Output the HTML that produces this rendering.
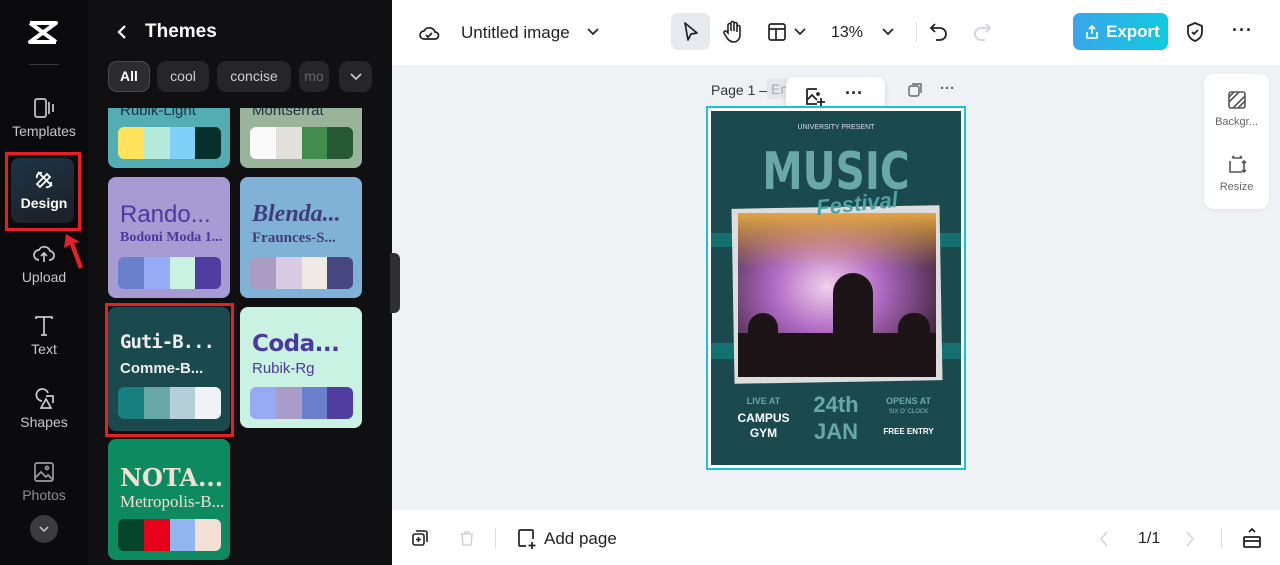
<!DOCTYPE html>
<html><head><meta charset="utf-8"><style>
*{box-sizing:border-box;margin:0;padding:0}
body{width:1280px;height:565px;overflow:hidden;font-family:"Liberation Sans",sans-serif;background:#eff2f5;position:relative}
.abs{position:absolute}
#side{left:0;top:0;width:88px;height:565px;background:#0b0b0d}
#panel{left:88px;top:0;width:304px;height:565px;background:#101013}
.nav{position:absolute;left:0;width:88px;text-align:center;color:#c9c9cc;font-size:14px}
.nav svg{display:block;margin:0 auto 3px}
.chip{position:absolute;top:61px;height:31px;border-radius:9px;background:#26262a;color:#cfcfd2;font-size:14px;line-height:31px;text-align:center}
.card{position:absolute;width:122px;height:121px;border-radius:8px;overflow:hidden}
.card .t1{position:absolute;left:12px;top:24px;font-size:22px;white-space:nowrap}
.card .t2{position:absolute;left:12px;top:53px;font-size:15px;white-space:nowrap}
.pal{position:absolute;left:10px;top:80px;width:103px;height:32px;border-radius:6px;overflow:hidden;display:flex}
.pal i{flex:1}
#top{left:392px;top:0;width:888px;height:65px;background:#fff}
#bot{left:392px;top:510px;width:888px;height:55px;background:#fff}
.ic{position:absolute}
</style></head><body>
<div id="side" class="abs">
 <svg class="abs" style="left:27px;top:20px" width="32" height="26" viewBox="0 0 32 26"><path d="M3 3h26L3 22h26M3 3l26 19" stroke="#fff" stroke-width="4" fill="none" stroke-linejoin="round"/></svg>
 <div class="abs" style="left:29px;top:64px;width:30px;height:1px;background:#3a3a3e"></div>
 <div class="nav" style="top:96px"><svg width="24" height="24" viewBox="0 0 24 24" fill="none" stroke="#c9c9cc" stroke-width="1.7"><rect x="3" y="3" width="11" height="18" rx="2"/><path d="M17 6v12M21 8v8"/></svg>Templates</div>
 <div class="abs" style="left:5px;top:152px;width:76px;height:79px;border:3px solid #e5202a"></div>
 <div class="abs" style="left:11px;top:158px;width:63px;height:65px;border-radius:8px;background:linear-gradient(160deg,#1d3448,#1d1f25)"></div>
 <div class="nav" style="top:168px;color:#fff;font-weight:bold"><svg width="24" height="24" viewBox="0 0 24 24" fill="none" stroke="#fff" stroke-width="1.8"><path d="M6 4l14 14M5 10a4 4 0 0 1 5-5M19 14a4 4 0 0 1-5 5M8 19l-3-3 10-10 3 3z"/></svg>Design</div>
 <svg class="abs" style="left:62px;top:232px" width="22" height="40" viewBox="0 0 22 40"><path d="M4 2l-2 14 6-3 9 24 4-2-9-24 6-1z" fill="#e5202a"/></svg>
 <div class="nav" style="top:242px"><svg width="24" height="24" viewBox="0 0 24 24" fill="none" stroke="#c9c9cc" stroke-width="1.7"><path d="M7 18a5 5 0 0 1 0-10 6 6 0 0 1 11 1 4 4 0 0 1-1 9M12 20v-9M9 14l3-3 3 3"/></svg>Upload</div>
 <div class="nav" style="top:314px"><svg width="24" height="24" viewBox="0 0 24 24" fill="none" stroke="#c9c9cc" stroke-width="1.7"><path d="M4 5V3h16v2M12 3v18M9 21h6"/></svg>Text</div>
 <div class="nav" style="top:387px"><svg width="24" height="24" viewBox="0 0 24 24" fill="none" stroke="#c9c9cc" stroke-width="1.7"><path d="M10 14a6 6 0 1 1 6-8M14 9h7v7M9 21l5-9 5 9z"/></svg>Shapes</div>
 <div class="nav" style="top:460px;color:#8f8f94"><svg width="24" height="24" viewBox="0 0 24 24" fill="none" stroke="#9a9aa0" stroke-width="1.7"><rect x="3" y="3" width="18" height="18" rx="2"/><circle cx="15" cy="8" r="1.5"/><path d="M3 18l6-6 5 5 2-2 5 5"/></svg>Photos</div>
 <div class="abs" style="left:30px;top:515px;width:28px;height:28px;border-radius:50%;background:#3a3a3f"></div>
 <svg class="abs" style="left:38px;top:525px" width="12" height="8" viewBox="0 0 12 8"><path d="M2 2l4 4 4-4" stroke="#ccc" stroke-width="1.5" fill="none"/></svg>
</div>
<div id="panel" class="abs">
 <svg class="abs" style="left:28px;top:24px" width="12" height="16" viewBox="0 0 12 16"><path d="M9 2L3 8l6 6" stroke="#fff" stroke-width="2.2" fill="none"/></svg>
 <div class="abs" style="left:57px;top:21px;color:#fff;font-weight:bold;font-size:19px">Themes</div>
 <div class="chip" style="left:20px;width:42px;background:#2b2b30;border:1px solid #4a4a50;color:#fff;font-weight:bold;line-height:29px">All</div>
 <div class="chip" style="left:69px;width:52px">cool</div>
 <div class="chip" style="left:129px;width:74px">concise</div>
 <div class="chip" style="left:211px;width:30px;overflow:hidden;color:#666">mo</div>
 <div class="chip" style="left:251px;width:33px"><svg width="12" height="8" viewBox="0 0 12 8" style="margin-top:11px"><path d="M1 1l5 5 5-5" stroke="#ccc" stroke-width="1.6" fill="none"/></svg></div>
 <div class="abs" style="left:0;top:108px;width:304px;height:457px;overflow:hidden">
  <div class="card" style="left:20px;top:-61px;background:#53aeb3"><div class="t2" style="top:55px;color:#234">Rubik-Light</div><div class="pal"><i style="background:#fde35b"></i><i style="background:#b6ead8"></i><i style="background:#7fcff9"></i><i style="background:#06302b"></i></div></div>
  <div class="card" style="left:152px;top:-61px;background:#9ab49b"><div class="t2" style="top:55px;color:#234">Montserrat</div><div class="pal"><i style="background:#fafafa"></i><i style="background:#e2e0dc"></i><i style="background:#428c4e"></i><i style="background:#275a32"></i></div></div>
  <div class="card" style="left:20px;top:69px;background:#a89ad3"><div class="t1" style="color:#4a3a9e;font-size:24px">Rando...</div><div class="t2" style="color:#4a3a9e;font-family:'Liberation Serif',serif;font-weight:bold;font-size:14px">Bodoni Moda 1...</div><div class="pal"><i style="background:#6a80cc"></i><i style="background:#97aaf6"></i><i style="background:#c9f2e2"></i><i style="background:#4f3e9f"></i></div></div>
  <div class="card" style="left:152px;top:69px;background:#80b2d8"><div class="t1" style="color:#3e3d7a;font-family:'Liberation Serif',serif;font-weight:bold;font-style:italic;font-size:24px">Blenda...</div><div class="t2" style="color:#3e3d7a;font-family:'Liberation Serif',serif;font-weight:bold">Fraunces-S...</div><div class="pal"><i style="background:#aa9cc2"></i><i style="background:#dacbe5"></i><i style="background:#efebe4"></i><i style="background:#46477e"></i></div></div>
  <div class="abs" style="left:17px;top:195px;width:129px;height:134px;border:3px solid #e5202a"></div>
  <div class="card" style="left:20px;top:199px;width:122px;height:124px;background:#1b4a4e"><div class="t1" style="color:#eee;font-family:'DejaVu Sans Mono',monospace;font-weight:bold;font-size:19px;letter-spacing:-1px">Guti-B...</div><div class="t2" style="color:#eee;font-weight:bold">Comme-B...</div><div class="pal"><i style="background:#177f7e"></i><i style="background:#68a9a8"></i><i style="background:#b5cfd8"></i><i style="background:#eff3f6"></i></div></div>
  <div class="card" style="left:152px;top:199px;background:#c9f2e2"><div class="t1" style="color:#4a3a9e;font-weight:bold;font-family:'DejaVu Sans',sans-serif;font-size:23px;letter-spacing:-0.5px">Coda...</div><div class="t2" style="color:#4a3a9e">Rubik-Rg</div><div class="pal"><i style="background:#97aaf6"></i><i style="background:#aa9cc9"></i><i style="background:#6a80cc"></i><i style="background:#4f3e9f"></i></div></div>
  <div class="card" style="left:20px;top:331px;background:#0e8a61"><div class="t1" style="color:#f3e0d5;font-weight:bold;font-family:'DejaVu Serif',serif;font-size:24px">NOTA...</div><div class="t2" style="color:#f3e0d5;font-family:'Liberation Serif',serif;font-size:17px">Metropolis-B...</div><div class="pal"><i style="background:#04442a"></i><i style="background:#e6001a"></i><i style="background:#92b6f0"></i><i style="background:#f3e0d5"></i></div></div>
 </div>
</div>
<div class="abs" style="left:390px;top:253px;width:10px;height:60px;background:#2f2f33;border-radius:0 6px 6px 0"></div>
<div id="top" class="abs">
 <svg class="ic" style="left:26px;top:22px" width="22" height="20" viewBox="0 0 22 20" fill="none" stroke="#222" stroke-width="1.7"><path d="M6 17a4 4 0 0 1 0-8 6 6 0 0 1 11 1 3.5 3.5 0 0 1 0 7zM8 13l2 2 4-4"/></svg>
 <div class="abs" style="left:69px;top:23px;font-size:17px;color:#222">Untitled image</div>
 <svg class="ic" style="left:195px;top:28px" width="12" height="8" viewBox="0 0 12 8"><path d="M1 1l5 5 5-5" stroke="#222" stroke-width="1.7" fill="none"/></svg>
 <div class="abs" style="left:279px;top:13px;width:39px;height:37px;border-radius:7px;background:#e6eaee"></div>
 <svg class="ic" style="left:290px;top:21px" width="18" height="22" viewBox="0 0 18 22"><path d="M3 2l12 10-6 1-3 6z" stroke="#222" stroke-width="1.7" fill="none" stroke-linejoin="round"/></svg>
 <svg class="ic" style="left:331px;top:20px" width="20" height="24" viewBox="0 0 20 24" fill="none" stroke="#222" stroke-width="1.6"><path d="M5 13V5a1.5 1.5 0 0 1 3 0v6V3a1.5 1.5 0 0 1 3 0v8V4a1.5 1.5 0 0 1 3 0v8V7a1.5 1.5 0 0 1 3 0v8c0 4-3 7-6 7s-5-1-7-4l-3-5a1.5 1.5 0 0 1 3-1z"/></svg>
 <svg class="ic" style="left:375px;top:22px" width="20" height="20" viewBox="0 0 20 20" fill="none" stroke="#222" stroke-width="1.7"><rect x="2" y="2" width="16" height="16" rx="2"/><path d="M2 7h16M9 7v11"/></svg>
 <svg class="ic" style="left:402px;top:28px" width="12" height="8" viewBox="0 0 12 8"><path d="M1 1l5 5 5-5" stroke="#222" stroke-width="1.6" fill="none"/></svg>
 <div class="abs" style="left:439px;top:24px;font-size:16px;color:#222">13%</div>
 <svg class="ic" style="left:490px;top:28px" width="12" height="8" viewBox="0 0 12 8"><path d="M1 1l5 5 5-5" stroke="#222" stroke-width="1.7" fill="none"/></svg>
 <div class="abs" style="left:524px;top:22px;width:1px;height:20px;background:#ddd"></div>
 <svg class="ic" style="left:537px;top:21px" width="20" height="22" viewBox="0 0 20 22" fill="none" stroke="#222" stroke-width="1.8"><path d="M6 3L2 7l4 4M2 7h9a6 6 0 0 1 0 12H7"/></svg>
 <svg class="ic" style="left:580px;top:21px" width="20" height="22" viewBox="0 0 20 22" fill="none" stroke="#cfd3d8" stroke-width="1.8"><path d="M14 3l4 4-4 4M18 7H9a6 6 0 0 0 0 12h4"/></svg>
 <div class="abs" style="left:681px;top:13px;width:95px;height:37px;border-radius:7px;background:linear-gradient(90deg,#3aa5ea,#10cbe0);color:#fff;font-weight:bold;font-size:17px;line-height:37px;padding-left:33px">Export</div>
 <svg class="ic" style="left:692px;top:24px" width="16" height="16" viewBox="0 0 16 16" fill="none" stroke="#fff" stroke-width="1.6"><path d="M8 10V2M5 5l3-3 3 3M3 8v6h10V8"/></svg>
 <svg class="ic" style="left:793px;top:21px" width="20" height="22" viewBox="0 0 20 22" fill="none" stroke="#222" stroke-width="1.8"><path d="M10 2l7 3v6c0 5-4 8-7 9-3-1-7-4-7-9V5zM7 11l2 2 4-4"/></svg>
 <div class="abs" style="left:840px;top:20px;font-size:18px;font-weight:bold;color:#222;letter-spacing:1px">···</div>
</div>
<!-- canvas -->
<div class="abs" style="left:711px;top:82px;font-size:14px;color:#333">Page 1 –</div>
<div class="abs" style="left:767px;top:79px;width:30px;height:20px;background:#e3e7eb;border-radius:3px;color:#aaa;font-size:14px;padding:2px 4px">En</div>
<div class="abs" style="left:786px;top:77px;width:99px;height:39px;background:#fff;border-radius:8px;box-shadow:0 2px 6px rgba(0,0,0,.12)"></div>
<svg class="ic" style="left:804px;top:86px" width="22" height="22" viewBox="0 0 22 22" fill="none" stroke="#222" stroke-width="1.8"><path d="M13 3H4a1 1 0 0 0-1 1v14h10M3 14l5-5 5 5"/><circle cx="14" cy="8" r="1"/><path d="M17 12v8M13 16h8"/></svg>
<div class="abs" style="left:845px;top:83px;font-size:18px;font-weight:bold;color:#222">···</div>
<svg class="ic" style="left:907px;top:82px" width="16" height="16" viewBox="0 0 16 16" fill="none" stroke="#666" stroke-width="1.4"><rect x="2" y="4" width="10" height="10" rx="2"/><path d="M5 2h9v9"/></svg>
<div class="abs" style="left:940px;top:80px;font-size:15px;color:#666;font-weight:bold">···</div>
<div class="abs" style="left:706px;top:106px;width:260px;height:364px;border:2px solid #18c2dc;background:#fff"></div>
<div class="abs" style="left:711px;top:111px;width:250px;height:354px;background:#1b4a4e;overflow:hidden">
 <div class="abs" style="left:0;top:122px;width:250px;height:14px;background:#147b7a;opacity:.8"></div>
 <div class="abs" style="left:0;top:232px;width:250px;height:16px;background:#147b7a;opacity:.8"></div>
 <div class="abs" style="left:0;top:13px;width:250px;text-align:center;color:#dde;font-size:7px">UNIVERSITY PRESENT</div>
 <div class="abs" style="left:0;top:32px;width:250px;text-align:center;color:#6aa8a8;font-size:52px;font-weight:bold;line-height:58px;font-family:'DejaVu Sans',sans-serif;transform:scaleX(.78)">MUSIC</div>
 <div class="abs" style="left:22px;top:96px;width:208px;height:175px;background:#ddd;transform:rotate(-1deg)"></div>
 <div class="abs" style="left:27px;top:102px;width:198px;height:164px;background:radial-gradient(ellipse at 45% 45%,#f2d0ea,#b06ac4 35%,#6b3f70 62%,#2a1a20 88%);overflow:hidden">
  <div class="abs" style="left:0;top:0;width:198px;height:55px;background:linear-gradient(#e2a545,rgba(220,150,70,0))"></div>
  <div class="abs" style="left:0;top:120px;width:198px;height:44px;background:#1c1416"></div>
  <div class="abs" style="left:95px;top:60px;width:40px;height:104px;background:#1c1416;border-radius:20px 20px 0 0"></div>
  <div class="abs" style="left:10px;top:100px;width:30px;height:64px;background:#1c1416;border-radius:15px 15px 0 0"></div>
  <div class="abs" style="left:160px;top:100px;width:32px;height:64px;background:#1c1416;border-radius:15px 15px 0 0"></div>
 </div>
 <div class="abs" style="left:105px;top:80px;color:#4fa3a5;font-size:22px;font-weight:bold;font-style:italic;transform:rotate(-6deg)">Festival</div>
 <div class="abs" style="left:20px;top:285px;width:65px;text-align:center;color:#6aa8a8;font-size:9px;font-weight:bold">LIVE AT</div>
 <div class="abs" style="left:20px;top:300px;width:65px;text-align:center;color:#fff;font-size:12px;font-weight:bold;line-height:15px">CAMPUS<br>GYM</div>
 <div class="abs" style="left:94px;top:280px;width:62px;text-align:center;color:#6aa8a8;font-size:22px;font-weight:bold;line-height:27px">24th<br>JAN</div>
 <div class="abs" style="left:165px;top:285px;width:65px;text-align:center;color:#6aa8a8;font-size:9px;font-weight:bold">OPENS AT</div>
 <div class="abs" style="left:165px;top:298px;width:65px;text-align:center;color:#8bb;font-size:6px">SIX O' CLOCK</div>
 <div class="abs" style="left:165px;top:316px;width:65px;text-align:center;color:#fff;font-size:8px;font-weight:bold">FREE ENTRY</div>
</div>
<div class="abs" style="left:1204px;top:74px;width:65px;height:135px;background:#fff;border-radius:10px;box-shadow:0 1px 4px rgba(0,0,0,.06)"></div>
<svg class="ic" style="left:1227px;top:90px" width="20" height="20" viewBox="0 0 20 20" fill="none" stroke="#555" stroke-width="1.6"><rect x="2" y="2" width="16" height="16" rx="2"/><path d="M2 12L12 2M6 18L18 6M2 7l5-5M11 18l7-7"/></svg>
<div class="abs" style="left:1204px;top:116px;width:65px;text-align:center;font-size:11px;color:#666">Backgr...</div>
<svg class="ic" style="left:1227px;top:155px" width="20" height="20" viewBox="0 0 20 20" fill="none" stroke="#555" stroke-width="1.6"><path d="M3 6v11h12M6 3h9M5 3l2-2M15 3l-2-2M17 6v11M15 15l2 2 2-2M15 8l2-2 2 2"/></svg>
<div class="abs" style="left:1204px;top:181px;width:65px;text-align:center;font-size:11px;color:#666">Resize</div>
<div id="bot" class="abs">
 <svg class="ic" style="left:19px;top:19px" width="18" height="18" viewBox="0 0 18 18" fill="none" stroke="#222" stroke-width="1.6"><rect x="2" y="5" width="11" height="11" rx="2"/><path d="M5 2h9a2 2 0 0 1 2 2v9M7.5 8v5M5 10.5h5"/></svg>
 <svg class="ic" style="left:66px;top:19px" width="18" height="18" viewBox="0 0 18 18" fill="none" stroke="#cfd3d8" stroke-width="1.6"><path d="M3 5h12M7 5V3h4v2M4 5l1 11h8l1-11"/></svg>
 <div class="abs" style="left:103px;top:18px;width:1px;height:20px;background:#ddd"></div>
 <svg class="ic" style="left:124px;top:18px" width="22" height="22" viewBox="0 0 22 22" fill="none" stroke="#222" stroke-width="1.7"><path d="M10 18H4a1 1 0 0 1-1-1V3a1 1 0 0 1 1-1h12a1 1 0 0 1 1 1v8M16 14v7M12.5 17.5h7"/></svg>
 <div class="abs" style="left:152px;top:19px;font-size:17px;color:#222">Add page</div>
 <svg class="ic" style="left:706px;top:20px" width="12" height="18" viewBox="0 0 12 18"><path d="M9 2L3 9l6 7" stroke="#cfd3d8" stroke-width="1.5" fill="none"/></svg>
 <div class="abs" style="left:746px;top:20px;font-size:16px;color:#222">1/1</div>
 <svg class="ic" style="left:792px;top:20px" width="12" height="18" viewBox="0 0 12 18"><path d="M3 2l6 7-6 7" stroke="#cfd3d8" stroke-width="1.5" fill="none"/></svg>
 <div class="abs" style="left:829px;top:18px;width:1px;height:20px;background:#ddd"></div>
 <svg class="ic" style="left:849px;top:17px" width="22" height="22" viewBox="0 0 22 22" fill="none" stroke="#222" stroke-width="1.8"><rect x="3" y="10" width="16" height="10" rx="1"/><path d="M3 14h16M8 5l3-3 3 3"/></svg>
</div>
</body></html>
